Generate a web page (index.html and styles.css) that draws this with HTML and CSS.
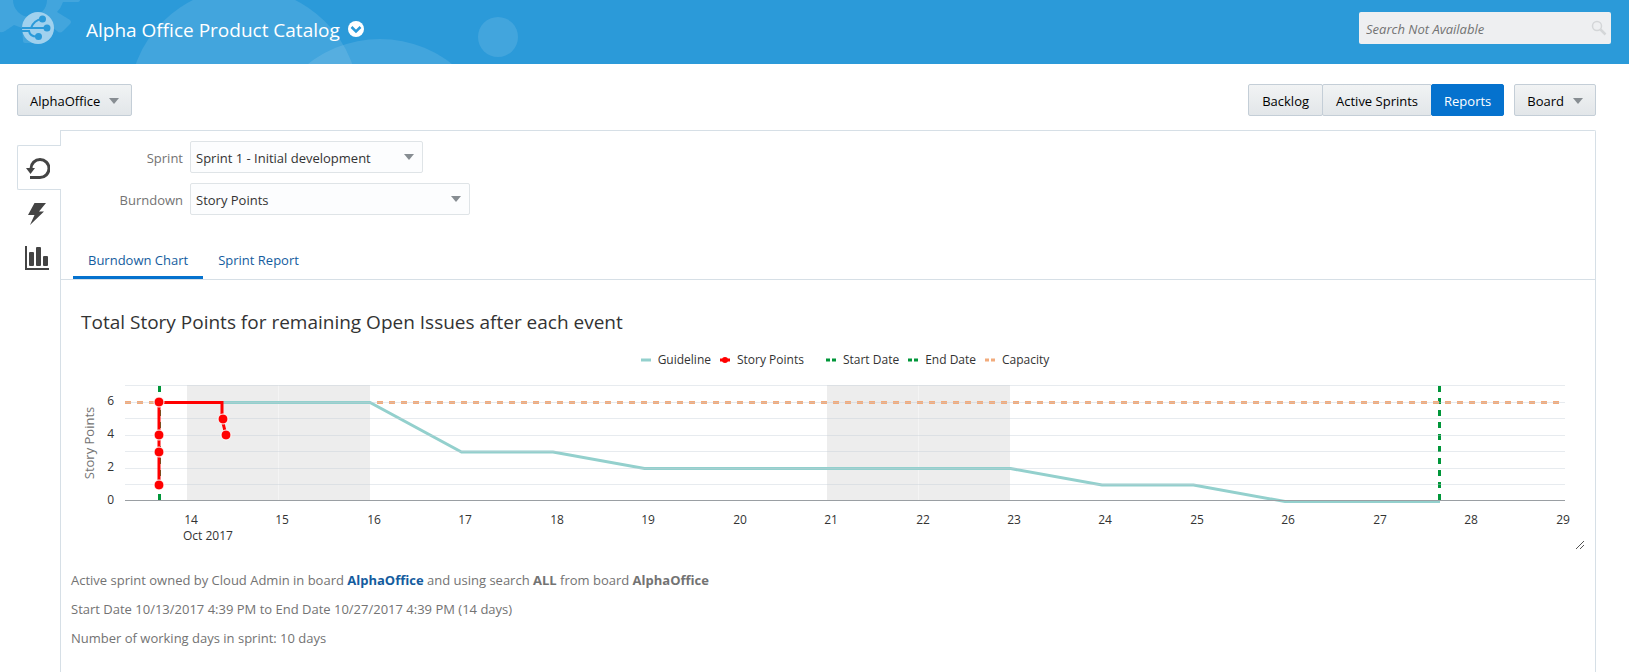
FILE: index.html
```html
<!DOCTYPE html>
<html lang="en">
<head>
<meta charset="utf-8">
<title>Alpha Office Product Catalog</title>
<link rel="stylesheet" href="styles.css">
</head>
<body>
<header class="banner">
  <svg class="banner-art" width="600" height="64" viewBox="0 0 600 64" fill="#fff" fill-opacity=".11" aria-hidden="true">
    <circle cx="244" cy="103" r="115"/>
    <circle cx="380" cy="155" r="116"/>
    <circle cx="498" cy="37" r="20"/>
    <path fill-rule="evenodd" d="M0 0H13A17 17 0 0 0 47 0H80Q80 2 77 2H63Q61 8 57 12L70 20Q72 22 70 24L63 31Q60 34 57 31L48 24Q44 27 40 28L38 41Q38 43 36 43H25Q23 43 23 41L22 28L14 25L5 31Q2 33 0 32Z"/>
  </svg>
  <svg class="logo" width="32" height="32" viewBox="0 0 32 32" aria-hidden="true">
    <circle cx="16" cy="16" r="16" fill="#a0d1ee"/>
    <g fill="#2b9ad9" stroke="#2b9ad9" stroke-width="2">
      <path fill="none" d="M0 16H24M9 16Q12 8 20 7M0 19H7Q8 25 16 24.500"/>
      <circle cx="20.500" cy="7" r="2.500"/><circle cx="25" cy="16" r="2.500"/><circle cx="16.500" cy="24.500" r="2.500"/>
    </g>
  </svg>
  <h1 class="banner-title">Alpha Office Product Catalog</h1>
  <button class="title-menu" aria-label="Project menu">
    <svg width="16" height="16" viewBox="0 0 16 16"><circle cx="8" cy="8" r="8" fill="#fff"/><path d="M3.500 6L8 10.500L12.500 6" fill="none" stroke="#2b9ad9" stroke-width="2.500"/></svg>
  </button>
  <div class="search">
    <input class="search-input" type="text" placeholder="Search Not Available" aria-label="Search" disabled>
    <svg width="16" height="16" viewBox="0 0 16 16" fill="none" stroke="#d4d6d8" aria-hidden="true"><circle cx="6" cy="6" r="4.500" stroke-width="1.500"/><path d="M9.500 9.500L14.500 14.500" stroke-width="2.500"/></svg>
  </div>
</header>

<div class="toolbar">
  <button class="btn">AlphaOffice<span class="caret"></span></button>
  <div class="toolbar-right">
    <div class="btn-group">
      <button class="btn">Backlog</button>
      <button class="btn">Active Sprints</button>
      <button class="btn btn-active">Reports</button>
    </div>
    <button class="btn">Board<span class="caret"></span></button>
  </div>
</div>

<div class="workspace">
  <nav class="rail">
    <button class="rail-item rail-item-active" aria-label="Burndown">
      <svg width="24" height="24" viewBox="0 0 24 24"><path d="M4 20.500H14A9 9 0 1 0 5 11.500V13" fill="none" stroke="#444" stroke-width="3"/><path d="M0 11H9L4.500 17Z" fill="#444"/></svg>
    </button>
    <button class="rail-item" aria-label="Velocity">
      <svg width="24" height="24" viewBox="0 0 24 24"><path fill="#444" d="M9.500 1H21L14 9.500H19L5 23L9.500 13H3Z"/></svg>
    </button>
    <button class="rail-item" aria-label="Issues report">
      <svg width="24" height="24" viewBox="0 0 24 24" fill="#444"><path d="M0 0H2V22H24V24H0Z"/><rect x="4" y="6" width="5" height="14" rx="1"/><rect x="11" y="1" width="5" height="19" rx="1"/><rect x="18" y="10" width="5" height="10" rx="1"/></svg>
    </button>
  </nav>

  <main class="panel">
    <form class="filters">
      <label for="sprint">Sprint</label>
      <div class="select-wrap select-sprint"><select id="sprint"><option>Sprint 1 - Initial development</option></select><span class="caret"></span></div>
      <label for="burndown">Burndown</label>
      <div class="select-wrap select-burndown"><select id="burndown"><option>Story Points</option></select><span class="caret"></span></div>
    </form>
    <div class="tabs" role="tablist">
      <button class="tab tab-active" role="tab" aria-selected="true">Burndown Chart</button>
      <button class="tab" role="tab" aria-selected="false">Sprint Report</button>
    </div>

    <h2 class="chart-title">Total Story Points for remaining Open Issues after each event</h2>
    <ul class="legend">
      <li><svg width="10" height="6"><path d="M0 3H10" stroke="#93d0cd" stroke-width="3"/></svg>Guideline</li>
      <li class="legend-gap"><svg width="10" height="6"><path d="M0 3H10" stroke="#f00" stroke-width="3"/><circle cx="5" cy="3" r="3" fill="#f00"/></svg>Story Points</li>
      <li><svg width="10" height="6"><path d="M0 3H10" stroke="#009639" stroke-width="3" stroke-dasharray="4 2"/></svg>Start Date</li>
      <li><svg width="10" height="6"><path d="M0 3H10" stroke="#009639" stroke-width="3" stroke-dasharray="4 2"/></svg>End Date</li>
      <li><svg width="10" height="6"><path d="M0 3H10" stroke="#f2ab7c" stroke-width="3" stroke-dasharray="4 2"/></svg>Capacity</li>
    </ul>
    <svg class="chart" viewBox="61 376 1534 176" role="img" aria-label="Burndown chart">
      <g fill="#ededed"><rect x="187" y="385" width="183" height="116"/><rect x="827" y="385" width="183" height="116"/></g>
      <path d="M278.500 385V500M918.500 385V500" stroke="#f4f4f4"/>
      <path d="M160 402.500H370L461.500 452H553L644.500 468.500H1010.500L1102 485H1193.500L1285 501.500H1440" fill="none" stroke="#93d0cd" stroke-width="3"/>
      <path d="M159.500 386V501M1439.500 386V501" stroke="#009639" stroke-width="3" stroke-dasharray="6 6"/>
      <path d="M125 402.500H160M377 402.500H1560" stroke="#f2ab7c" stroke-width="3" stroke-dasharray="6 6"/>
      <path d="M125 385.500H1565M125 402.500H1565M125 418.500H1565M125 435.500H1565M125 451.500H1565M125 468.500H1565M125 484.500H1565" stroke="#c4cdd6" stroke-opacity=".4"/>
      <path d="M125 500.500H1565" stroke="#9a9fa3"/>
      <path d="M159 485V402.500H222V419L226 435" fill="none" stroke="#f00" stroke-width="3"/>
      <g fill="#f00" stroke="#fff"><circle cx="159" cy="402" r="5"/><circle cx="159" cy="435" r="5"/><circle cx="159" cy="452" r="5"/><circle cx="159" cy="485" r="5"/><circle cx="223" cy="419" r="5"/><circle cx="226" cy="435" r="5"/></g>
      <g class="axis-label" text-anchor="end"><text x="114" y="405">6</text><text x="114" y="438">4</text><text x="114" y="471">2</text><text x="114" y="504">0</text></g>
      <g class="axis-label" text-anchor="middle">
        <text x="191" y="524">14</text><text x="282" y="524">15</text><text x="374" y="524">16</text><text x="465" y="524">17</text><text x="557" y="524">18</text><text x="648" y="524">19</text><text x="740" y="524">20</text><text x="831" y="524">21</text><text x="923" y="524">22</text><text x="1014" y="524">23</text><text x="1105" y="524">24</text><text x="1197" y="524">25</text><text x="1288" y="524">26</text><text x="1380" y="524">27</text><text x="1471" y="524">28</text><text x="1563" y="524">29</text>
        <text x="208" y="540">Oct 2017</text>
      </g>
      <text class="axis-title" text-anchor="middle" transform="translate(94 443) rotate(-90)">Story Points</text>
      <path d="M1576 549L1584 541M1580 549L1584 545" stroke="#555"/>
    </svg>
    <section class="summary">
      <p>Active sprint owned by Cloud Admin in board <a href="#board">AlphaOffice</a> and using search <b>ALL</b> from board <b>AlphaOffice</b></p>
      <p>Start Date 10/13/2017 4:39 PM to End Date 10/27/2017 4:39 PM (14 days)</p>
      <p>Number of working days in sprint: 10 days</p>
    </section>
  </main>
</div>
</body>
</html>
```
FILE: styles.css
```css
* { box-sizing: border-box; }
body {
  margin: 0;
  min-height: 100vh;
  display: flex;
  flex-direction: column;
  background: #fff;
  color: #333;
  font: 13px/20px "Open Sans", "Noto Sans", sans-serif;
}
button, select, input { font: inherit; }
button { margin: 0; cursor: pointer; }

.banner {
  position: relative;
  display: flex;
  align-items: center;
  height: 64px;
  padding: 0 18px 8px 22px;
  background: #2b9ad9;
}
.banner-art { position: absolute; left: 0; top: 0; }
.logo, .banner-title, .title-menu, .search { position: relative; }
.banner-title {
  margin: 0 8px 0 32px;
  padding-top: 4px;
  color: #fff;
  font-size: 19px;
  line-height: 28px;
  font-weight: 400;
}
.title-menu { display: flex; padding: 2px 0 0; border: 0; background: none; }
.search {
  display: flex;
  align-items: center;
  width: 252px;
  height: 32px;
  margin-left: auto;
  padding: 0 4px 0 7px;
  border-radius: 2px;
  background: #eeeff1;
}
.search-input { flex: 1; min-width: 0; padding: 2px 0 0; border: 0; background: none; font-style: italic; }
.search-input::placeholder { color: #737373; opacity: 1; }

.toolbar { display: flex; justify-content: space-between; padding: 20px 33px 14px 17px; }
.toolbar-right { display: flex; gap: 10px; }
.btn-group { display: flex; }
.btn {
  display: flex;
  align-items: center;
  height: 32px;
  padding: 2px 12px 0;
  border: 1px solid #c4ced7;
  border-radius: 2px;
  background: linear-gradient(#f1f3f4, #e2e6e9);
  color: #000;
}
.btn-group .btn { padding: 2px 13px 0; }
.btn-group .btn + .btn { margin-left: -1px; }
.btn-group .btn-active { padding: 2px 12px 0; border-color: #0572ce; background: #0572ce; color: #fff; }
.caret {
  margin-left: 9px;
  border: 5px solid transparent;
  border-top: 6px solid #878d92;
  border-bottom: 0;
}

.workspace { flex: 1; display: flex; padding: 0 33px 0 17px; }
.rail { position: relative; z-index: 1; width: 44px; margin-right: -1px; padding-top: 15px; }
.rail-item {
  display: flex;
  align-items: center;
  justify-content: center;
  width: 43px;
  height: 44px;
  padding: 3px 3px 0 0;
  border: 0;
  background: none;
}
.rail-item-active {
  width: 44px;
  height: 45px;
  border: 1px solid #d6dfe6;
  border-right: 0;
  border-radius: 2px 0 0 2px;
  background: #fff;
}
.panel { flex: 1; min-width: 0; border: 1px solid #d6dfe6; border-bottom: 0; border-radius: 0 2px 0 0; }

.filters {
  display: grid;
  grid-template-columns: 122px 1fr;
  column-gap: 7px;
  row-gap: 10px;
  align-items: center;
  padding-top: 10px;
}
.filters label { padding-top: 2px; color: #737373; text-align: right; }
.select-wrap { display: grid; align-items: center; }
.select-sprint { width: 233px; }
.select-burndown { width: 280px; }
.select-wrap select, .select-wrap .caret { grid-area: 1 / 1; }
.select-wrap select {
  appearance: none;
  width: 100%;
  height: 32px;
  padding: 2px 5px 0;
  border: 1px solid #dfe4e7;
  border-radius: 2px;
  background: #fcfdfe;
  color: #333;
}
.select-wrap .caret { justify-self: end; margin-right: 9px; pointer-events: none; }

.tabs { display: flex; margin-top: 26px; padding-left: 12px; border-bottom: 1px solid #d6dfe6; }
.tab {
  height: 38px;
  padding: 2px 15px 0;
  border: 0;
  border-bottom: 3px solid transparent;
  background: none;
  color: #145c9e;
}
.tab-active { border-bottom-color: #0572ce; }

.chart-title { margin: 28px 0 0 20px; font-size: 19px; line-height: 28px; font-weight: 400; }
.legend {
  display: flex;
  justify-content: center;
  gap: 9px;
  margin: 14px 0 6px;
  padding-right: 10px;
  padding-left: 44px;
  list-style: none;
  font-size: 12px;
}
.legend li { display: flex; align-items: center; gap: 7px; }
.legend-gap { margin-right: 13px; }
.chart { display: block; width: 100%; }
.axis-label { fill: #333; font-size: 12px; }
.axis-title { fill: #737373; font-size: 13px; }

.summary { padding: 18px 10px 14px; color: #737373; }
.summary p { margin: 0 0 9px; }
.summary a { color: #145c9e; font-weight: 700; text-decoration: none; }
```
